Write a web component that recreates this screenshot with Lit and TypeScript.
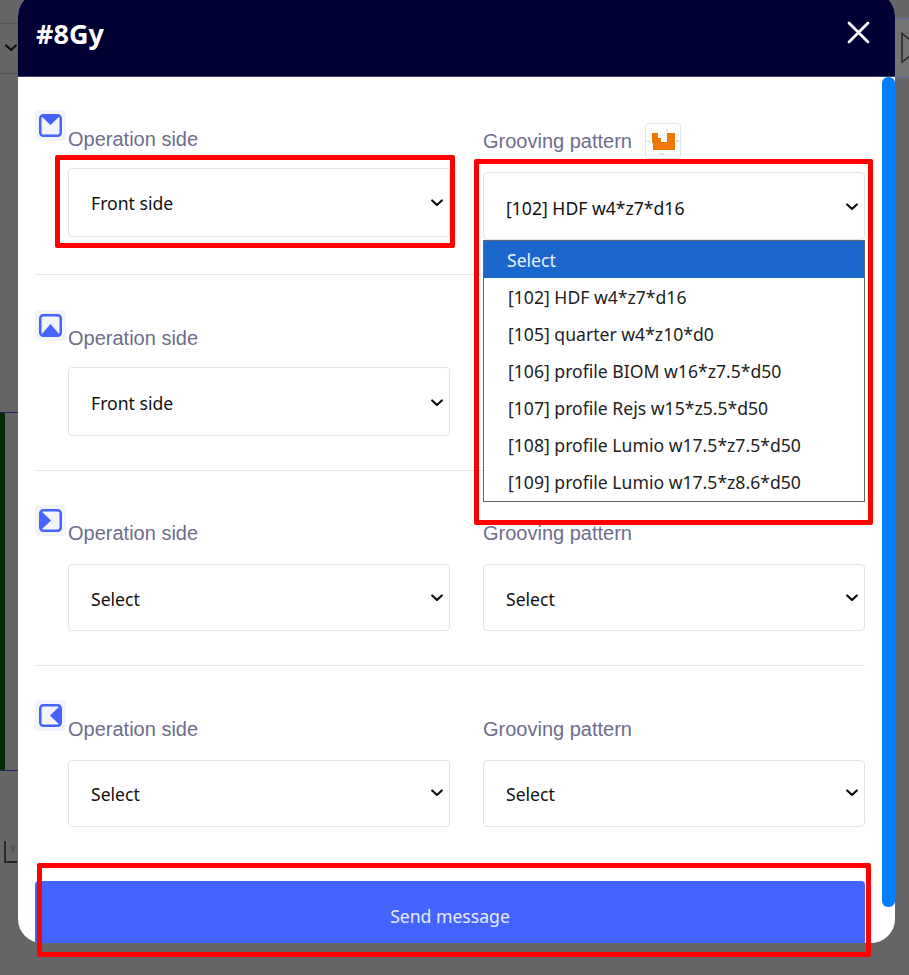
import { LitElement, html, css, svg } from "lit";
import { customElement } from "lit/decorators.js";

const SIDES: Record<string, string> = {
  top: "M2 2H20L11 10.5Z",
  bottom: "M2 20L11 9.5L20 20Z",
  left: "M2 2L11.5 11L2 20Z",
  right: "M20 2L10.5 11L20 20Z",
};

const chevron = html`<svg class="chev" viewBox="0 0 12 8" width="12" height="8"><path d="M1.2 1.5L6 6L10.8 1.5" fill="none" stroke="#111" stroke-width="2.2" stroke-linecap="round" stroke-linejoin="round"/></svg>`;

const GROOVES = [
  "[102] HDF w4*z7*d16",
  "[105] quarter w4*z10*d0",
  "[106] profile BIOM w16*z7.5*d50",
  "[107] profile Rejs w15*z5.5*d50",
  "[108] profile Lumio w17.5*z7.5*d50",
  "[109] profile Lumio w17.5*z8.6*d50",
];

@customElement("app-root")
export class AppRoot extends LitElement {
  static styles = css`
    :host {
      display: block;
      position: relative;
      width: 909px;
      height: 975px;
      overflow: hidden;
      background: #666666;
      font-family: "Noto Sans", "Open Sans", sans-serif;
    }
    .bg { position: absolute; }
    .bg.l1 { left: 0; top: 23px; width: 18px; height: 1px; background: #555; }
    .bg.l2 { left: 0; top: 73px; width: 18px; height: 1px; background: #555; }
    .bg.chev-l { left: 5px; top: 44px; display: flex; }
    .bg.panel { left: 895px; top: 18px; width: 14px; height: 58px; background: #747474; border-top: 1px solid #5d6aa0; border-bottom: 1px solid #5d6aa0; }
    .bg.tri { left: 900px; top: 32px; }
    .bg.green { left: 0; top: 412px; width: 5px; height: 358px; background: #012c01; }
    .bg.l3 { left: 0; top: 412px; width: 18px; height: 1px; background: #24246a; }
    .bg.l4 { left: 0; top: 770px; width: 18px; height: 1px; background: #24246a; }
    .bg.axes { left: 4px; top: 841px; }
    .bg.axis-y { left: 11px; top: 842px; font: 9px "Liberation Sans", sans-serif; color: #444; }

    .modal {
      position: relative;
      box-sizing: border-box;
      width: 877px;
      height: 951px;
      margin: -8px 0 0 18px;
      background: #fff;
      border-radius: 24px;
      overflow: hidden;
      display: flex;
      flex-direction: column;
    }
    .head {
      flex: none;
      height: 85px;
      padding: 8px 25px 0 18px;
      box-sizing: border-box;
      background: #000033;
      border-bottom: 1px solid #3c3c6e;
      display: flex;
      align-items: center;
      justify-content: space-between;
      color: #fff;
    }
    .title { font-size: 27px; font-weight: 700; line-height: 1; margin-top: -9px; }
    .close { display: block; margin-top: -11px; }
    .scroll {
      position: absolute;
      left: 864px;
      top: 85px;
      width: 13px;
      height: 830px;
      background: #0080ff;
      border-radius: 6px;
    }
    .body { flex: 1; padding: 0 0 0 17px; display: flex; flex-direction: column; }
    .sec {
      width: 830px;
      display: flex;
      border-bottom: 1px solid #e4e4ea;
      box-sizing: border-box;
    }
    .sec.s1 { padding-top: 33px; height: 198px; }
    .sec.s2 { padding-top: 35px; height: 196px; }
    .sec.s3 { padding-top: 34px; height: 195px; }
    .sec.s4 { padding-top: 34px; height: 215px; border-bottom: none; }
    .chip {
      flex: none;
      width: 31px;
      height: 31px;
      margin-right: 2px;
      background: #f2f3fb;
      border-radius: 3px;
      display: flex;
      align-items: center;
      justify-content: center;
    }
    .cols { display: grid; grid-template-columns: 382px 382px; column-gap: 33px; }
    .field { display: flex; flex-direction: column; }
    .label-row { display: flex; align-items: center; gap: 13px; }
    .label {
      font: 20px/20px "Liberation Sans", sans-serif;
      color: #6d6d8c;
      height: 20px;
    }
    .s1 .left .label-row { margin-top: 19px; }
    .s1 .left .box { margin-top: 19px; height: 69px; }
    .s1 .right .label-row { margin-top: 13px; }
    .s1 .right .box { margin-top: 13px; height: 68px; }
    .s1 .right select { padding-top: 3px; }
    .s1 .right .chev { margin-top: -3px; }
    .s2 .label-row { margin-top: 18px; }
    .s2 .box { margin-top: 19px; height: 69px; }
    .s2 select, .s3 select { padding-top: 2px; }
    .s2 .chev { margin-top: -3px; }
    .s3 .label-row { margin-top: 18px; }
    .s3 .box { margin-top: 21px; height: 67px; }
    .s4 .label-row { margin-top: 19px; }
    .s4 .box { margin-top: 21px; height: 67px; }
    .s4 .chev { margin-top: -5px; }
    .groove {
      width: 36px;
      height: 36px;
      box-sizing: border-box;
      border: 1px solid #e4e4ec;
      border-radius: 4px;
      display: flex;
      background: #fff;
    }
    .box {
      position: relative;
      box-sizing: border-box;
      border: 1.5px solid #e2e2ea;
      border-radius: 4px;
      background: #fff;
    }
    select {
      appearance: none;
      box-sizing: border-box;
      width: 100%;
      height: 100%;
      border: none;
      outline: none;
      background: transparent;
      padding: 0 0 0 22px;
      font: 17.6px "Noto Sans", sans-serif;
      color: #111;
    }
    .chev { position: absolute; right: 6px; top: 50%; margin-top: -4px; pointer-events: none; }
    .bg.chev-l .chev { position: static; margin: 0; }

    .list {
      position: absolute;
      left: 465px;
      top: 248px;
      width: 382px;
      box-sizing: border-box;
      border: 1px solid #666;
      background: #fff;
      font-size: 17.6px;
      color: #222;
      min-height: 262px;
    }
    .opt { box-sizing: border-box; height: 37px; line-height: 37px; padding: 1px 0 0 24px; white-space: nowrap; }
    .opt.sel { background: #1a66cc; color: #eaf2ff; padding-left: 23px; }

    .send {
      position: absolute;
      left: 17px;
      top: 889px;
      width: 830px;
      height: 62px;
      border: none;
      border-radius: 4px 4px 0 0;
      background: #4364ff;
      color: #e8ebff;
      font: 17.6px "Noto Sans", sans-serif;
      padding: 8px 0 0;
    }
    .frame {
      position: absolute;
      box-sizing: border-box;
      border: 5px solid #ff0000;
      border-radius: 2px;
      pointer-events: none;
    }
    .frame.a { left: 55px; top: 155px; width: 400px; height: 93px; }
    .frame.b { left: 474px; top: 159px; width: 399px; height: 366px; }
    .frame.c { left: 37px; top: 863px; width: 834px; height: 94px; }
  `;

  private sideIcon(side: string) {
    return html`<div class="chip">
      <svg width="23" height="23" viewBox="0 0 22 22">
        <rect x="1.2" y="1.2" width="19.6" height="19.6" rx="3" fill="#f2f3fb" stroke="#4364ff" stroke-width="2.4"/>
        ${svg`<path d=${SIDES[side]} fill="#4364ff"/>`}
      </svg>
    </div>`;
  }

  private field(cls: string, label: string, value: string, groove = false) {
    return html`<div class="field ${cls}">
      <div class="label-row">
        <span class="label">${label}</span>
        ${groove
          ? html`<span class="groove">
              <svg width="34" height="34" viewBox="0 0 34 34">
                <path d="M6 9H12V14H15V18H21V9H29V26H7V19H6Z" fill="#f07800"/>
                <path d="M1 17H4M30 17H33M13 30H18M21 5V7" stroke="#c4c4c4" stroke-width="1" fill="none"/>
              </svg>
            </span>`
          : ""}
      </div>
      <div class="box">
        <select aria-label=${label}><option>${value}</option></select>
        ${chevron}
      </div>
    </div>`;
  }

  render() {
    return html`
      <div class="bg l1"></div>
      <div class="bg l2"></div>
      <div class="bg chev-l">${chevron}</div>
      <div class="bg panel"></div>
      <svg class="bg tri" width="9" height="32" viewBox="0 0 9 32"><path d="M2 1.5V30L20 16Z" fill="none" stroke="#222" stroke-width="1.4"/></svg>
      <div class="bg green"></div>
      <div class="bg l3"></div>
      <div class="bg l4"></div>
      <svg class="bg axes" width="14" height="23" viewBox="0 0 14 23"><path d="M1 0V21H13" fill="none" stroke="#111" stroke-width="1.4"/></svg>
      <span class="bg axis-y">y</span>

      <div class="modal">
        <div class="head">
          <span class="title">#8Gy</span>
          <svg class="close" width="23" height="23" viewBox="0 0 23 23"><path d="M2 2L21 21M21 2L2 21" stroke="#fff" stroke-width="2.8" stroke-linecap="round"/></svg>
        </div>
        <div class="body">
          <div class="sec s1">
            ${this.sideIcon("top")}
            <div class="cols">
              ${this.field("left", "Operation side", "Front side")}
              ${this.field("right", "Grooving pattern", GROOVES[0], true)}
            </div>
          </div>
          <div class="sec s2">
            ${this.sideIcon("bottom")}
            <div class="cols">
              ${this.field("left", "Operation side", "Front side")}
            </div>
          </div>
          <div class="sec s3">
            ${this.sideIcon("left")}
            <div class="cols">
              ${this.field("left", "Operation side", "Select")}
              ${this.field("right", "Grooving pattern", "Select")}
            </div>
          </div>
          <div class="sec s4">
            ${this.sideIcon("right")}
            <div class="cols">
              ${this.field("left", "Operation side", "Select")}
              ${this.field("right", "Grooving pattern", "Select")}
            </div>
          </div>
        </div>
        <div class="scroll"></div>
        <div class="list">
          <div class="opt sel">Select</div>
          ${GROOVES.map((g) => html`<div class="opt">${g}</div>`)}
        </div>
        <button class="send">Send message</button>
      </div>
      <div class="frame a"></div>
      <div class="frame b"></div>
      <div class="frame c"></div>
    `;
  }
}
